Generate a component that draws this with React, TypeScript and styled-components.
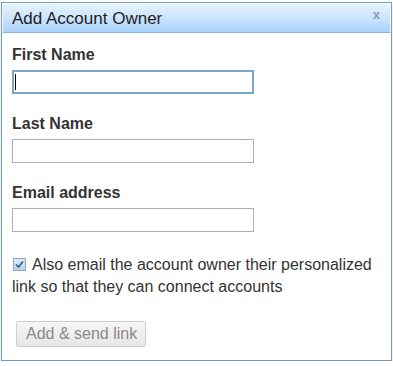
import React from "react";
import styled, { createGlobalStyle } from "styled-components";

const Global = createGlobalStyle`
  html, body { margin: 0; padding: 0; background: #fff; }
  body { font-family: Arial, "Liberation Sans", sans-serif; }
`;

const Dialog = styled.div`
  margin: 2px 0 0 1px;
  width: 391px;
  height: 359px;
  box-sizing: border-box;
  border: 1px solid #6f9cc8;
  background: #fff;
  box-shadow: 0 3px 4px rgba(0, 0, 0, 0.12);
  display: flex;
  flex-direction: column;
`;

const TitleBar = styled.div`
  height: 30px;
  box-sizing: border-box;
  border: 1px solid #fff;
  border-bottom: 1px solid #8fb6dc;
  background: linear-gradient(to bottom, #e5f2ff 0%, #cfe6fd 45%, #a9d2fb 100%);
  display: flex;
  align-items: center;
  justify-content: space-between;
  padding: 0 8px 0 9px;
`;

const Title = styled.span`
  font-size: 17px;
  color: #1e1e1e;
  line-height: 20px;
  margin-top: 1px;
`;

const Close = styled.span`
  font-size: 13px;
  font-weight: bold;
  color: #8a9cb0;
  margin-top: -8px;
  margin-right: 2px;
`;

const Body = styled.div`
  padding: 13px 10px 0 10px;
  display: flex;
  flex-direction: column;
`;

const Label = styled.label`
  font-size: 16px;
  font-weight: bold;
  color: #333;
  line-height: 18px;
`;

const Field = styled.div`
  display: flex;
  flex-direction: column;
  gap: 6px;
  margin-bottom: 21px;
`;

const Input = styled.input<{ $focused?: boolean }>`
  width: 242px;
  height: 24px;
  box-sizing: border-box;
  margin: 0;
  border: 1px solid ${(p) => (p.$focused ? "#7ba6cc" : "#a9b0ba")};
  outline: ${(p) => (p.$focused ? "1px solid #7ba6cc" : "none")};
  outline-offset: -2px;
  font-size: 15px;
  font-family: Arial, "Liberation Sans", sans-serif;
  padding: 0 3px;
  background: #fff;
`;

const Caret = styled.span`
  position: absolute;
  left: 3px;
  top: 4px;
  width: 1px;
  height: 16px;
  background: #000;
`;

const InputWrap = styled.div`
  position: relative;
  width: 242px;
`;

const CheckRow = styled.div`
  margin-top: 1px;
  font-size: 16px;
  line-height: 22px;
  color: #333;
`;

const Check = styled.span`
  display: inline-block;
  width: 11px;
  height: 11px;
  border: 1px solid #8ea7c2;
  background: linear-gradient(to bottom, #dbe9f7, #b9d2ec);
  vertical-align: -1px;
  margin-right: 6px;
  margin-left: 1px;
  position: relative;
  svg { position: absolute; left: 0; top: 0; }
`;

const Button = styled.button`
  margin: 23px 0 0 4px;
  align-self: flex-start;
  height: 26px;
  padding: 0 8px 0 9px;
  border: 1px solid #cfcfcf;
  border-radius: 2px;
  background: linear-gradient(to bottom, #f6f6f6, #e6e6e6);
  color: #8a8a8a;
  font-size: 16px;
  font-family: Arial, "Liberation Sans", sans-serif;
`;

export default function App() {
  return (
    <>
      <Global />
      <Dialog>
        <TitleBar>
          <Title>Add Account Owner</Title>
          <Close>x</Close>
        </TitleBar>
        <Body>
          <Field>
            <Label>First Name</Label>
            <InputWrap>
              <Input $focused />
              <Caret />
            </InputWrap>
          </Field>
          <Field>
            <Label>Last Name</Label>
            <Input />
          </Field>
          <Field>
            <Label>Email address</Label>
            <Input />
          </Field>
          <CheckRow>
            <Check>
              <svg width="11" height="11" viewBox="0 0 11 11">
                <path d="M2 5.5 L4.5 8 L9 2.5" fill="none" stroke="#2f5f93" strokeWidth="1.6" />
              </svg>
            </Check>
            Also email the account owner their personalized link so that they can connect accounts
          </CheckRow>
          <Button>Add &amp; send link</Button>
        </Body>
      </Dialog>
    </>
  );
}
